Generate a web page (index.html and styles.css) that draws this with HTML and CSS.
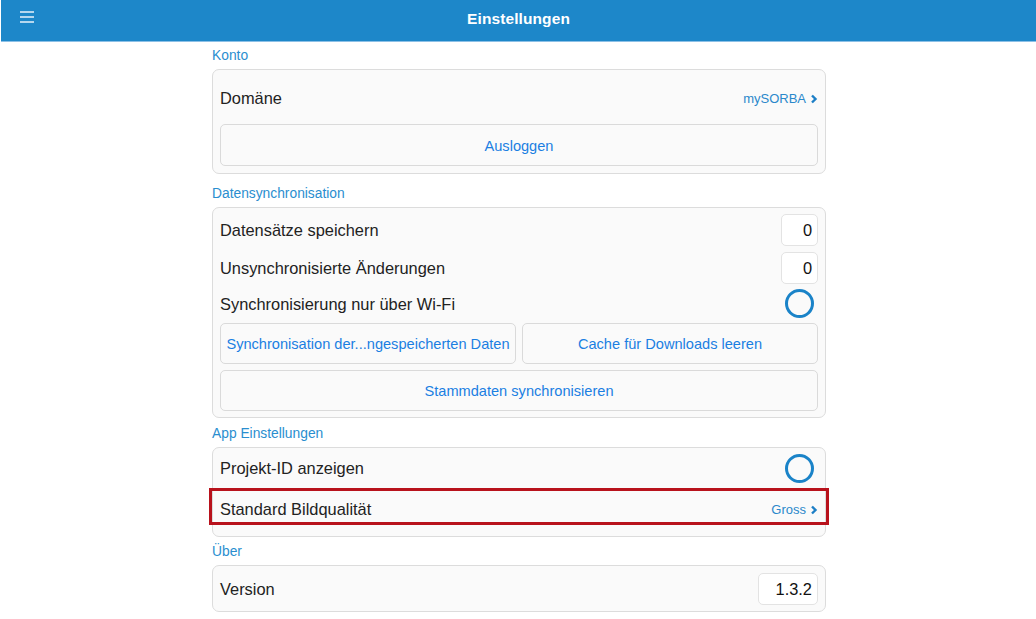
FILE: index.html
```html
<!DOCTYPE html>
<html lang="de">
<head>
<meta charset="utf-8">
<title>Einstellungen</title>
<link rel="stylesheet" href="styles.css">
</head>
<body>
<header class="topbar">
  <button class="menu" aria-label="Menü">
    <svg width="14" height="12" viewBox="0 0 14 12"><path d="M0 1h14M0 6h14M0 11h14" stroke="#e8f2fa" stroke-width="1.6"/></svg>
  </button>
  <h1 class="title">Einstellungen</h1>
</header>

<main class="settings">
  <div class="section-label">Konto</div>
  <section class="card card-konto">
    <div class="row row-tall">
      <span class="row-text">Domäne</span>
      <span class="link">mySORBA <svg class="chev" width="8" height="10" viewBox="0 0 8 10"><path d="M2 1.5l3.5 3.5L2 8.5" fill="none" stroke="#1d7fc6" stroke-width="2.4"/></svg></span>
    </div>
    <button class="btn btn-full">Ausloggen</button>
  </section>

  <div class="section-label">Datensynchronisation</div>
  <section class="card card-sync">
    <div class="row row-input">
      <span class="row-text">Datensätze speichern</span>
      <span class="field field-num">0</span>
    </div>
    <div class="row row-input">
      <span class="row-text">Unsynchronisierte Änderungen</span>
      <span class="field field-num">0</span>
    </div>
    <div class="row row-toggle">
      <span class="row-text">Synchronisierung nur über Wi-Fi</span>
      <span class="toggle"></span>
    </div>
    <div class="btn-pair">
      <button class="btn">Synchronisation der...ngespeicherten Daten</button>
      <button class="btn">Cache für Downloads leeren</button>
    </div>
    <button class="btn btn-full">Stammdaten synchronisieren</button>
  </section>

  <div class="section-label">App Einstellungen</div>
  <section class="card card-app">
    <div class="row row-toggle">
      <span class="row-text">Projekt-ID anzeigen</span>
      <span class="toggle"></span>
    </div>
    <div class="row row-quality">
      <span class="row-text">Standard Bildqualität</span>
      <span class="link">Gross <svg class="chev" width="8" height="10" viewBox="0 0 8 10"><path d="M2 1.5l3.5 3.5L2 8.5" fill="none" stroke="#1d7fc6" stroke-width="2.4"/></svg></span>
    </div>
  </section>

  <div class="section-label">Über</div>
  <section class="card card-about">
    <div class="row row-input">
      <span class="row-text">Version</span>
      <span class="field field-version">1.3.2</span>
    </div>
  </section>
</main>
</body>
</html>
```

FILE: styles.css
```css
* { box-sizing: border-box; }

body {
  margin: 0;
  background: #ffffff;
  font-family: "Liberation Sans", Arial, sans-serif;
  color: #222222;
}

.topbar {
  position: relative;
  height: 42px;
  margin-left: 1px;
  background: #1d87c9;
  border-bottom: 1px solid #8cc0e6;
  display: flex;
  align-items: center;
  justify-content: center;
  padding-bottom: 4px;
}

.menu {
  position: absolute;
  left: 19px;
  top: 11px;
  padding: 0;
  border: 0;
  background: none;
  display: flex;
}

.title {
  margin: 0;
  font-size: 15.5px;
  font-weight: bold;
  color: #ffffff;
  letter-spacing: 0.1px;
}

.settings {
  width: 614px;
  margin: 0 0 0 212px;
  display: flex;
  flex-direction: column;
}

.section-label {
  font-size: 13.8px;
  line-height: 16px;
  padding: 6px 0 5px;
  color: #2a8ecf;
}

.card {
  background: #fafafa;
  border: 1px solid #dcdcdc;
  border-radius: 7px;
  padding: 0 7px;
  display: flex;
  flex-direction: column;
}

.card-konto { padding-top: 7px; padding-bottom: 7px; gap: 5px; margin-bottom: 6px; }
.card-sync { padding-top: 6px; padding-bottom: 6px; gap: 6px; margin-bottom: 2px; }
.card-app { padding-top: 6px; padding-bottom: 7px; gap: 7px; margin-bottom: 1px; }
.card-about { padding-top: 7px; padding-bottom: 6px; }

.row {
  display: flex;
  align-items: center;
  justify-content: space-between;
}

.row-text {
  font-size: 16.4px;
  color: #222222;
  padding-top: 1px;
}

.row-tall { height: 42px; }
.row-input { height: 32px; }
.row-toggle { height: 28px; }
.card-sync .row-toggle { height: 27px; }

.row-quality {
  position: relative;
  height: 40px;
}

.row-quality::after {
  content: "";
  position: absolute;
  left: -11px;
  right: -11px;
  top: -1px;
  bottom: 4px;
  border: 3px solid #b8121c;
  pointer-events: none;
}

.link {
  display: flex;
  align-items: center;
  gap: 4px;
  font-size: 13px;
  color: #2a88cb;
  padding-top: 1px;
}

.chev { display: block; }

.field {
  height: 32px;
  background: #ffffff;
  border: 1px solid #e3e3e3;
  border-radius: 5px;
  font-size: 16.4px;
  color: #111111;
  display: flex;
  align-items: center;
  justify-content: flex-end;
  padding-right: 5px;
  padding-top: 1px;
}

.field-num { width: 37px; }
.field-version { width: 60px; }

.toggle {
  width: 29px;
  height: 29px;
  margin-right: 4px;
  border: 3px solid #1a83c8;
  border-radius: 50%;
}

.btn {
  height: 41px;
  background: #fafafa;
  border: 1px solid #dadada;
  border-radius: 5px;
  font-family: "Liberation Sans", Arial, sans-serif;
  font-size: 14.6px;
  color: #1b7fe2;
  padding: 1px 0 0;
  text-align: center;
}

.btn-full { width: 100%; }
.card-konto .btn-full { height: 42px; }

.btn-pair {
  display: grid;
  grid-template-columns: 1fr 1fr;
  gap: 6px;
}
```
